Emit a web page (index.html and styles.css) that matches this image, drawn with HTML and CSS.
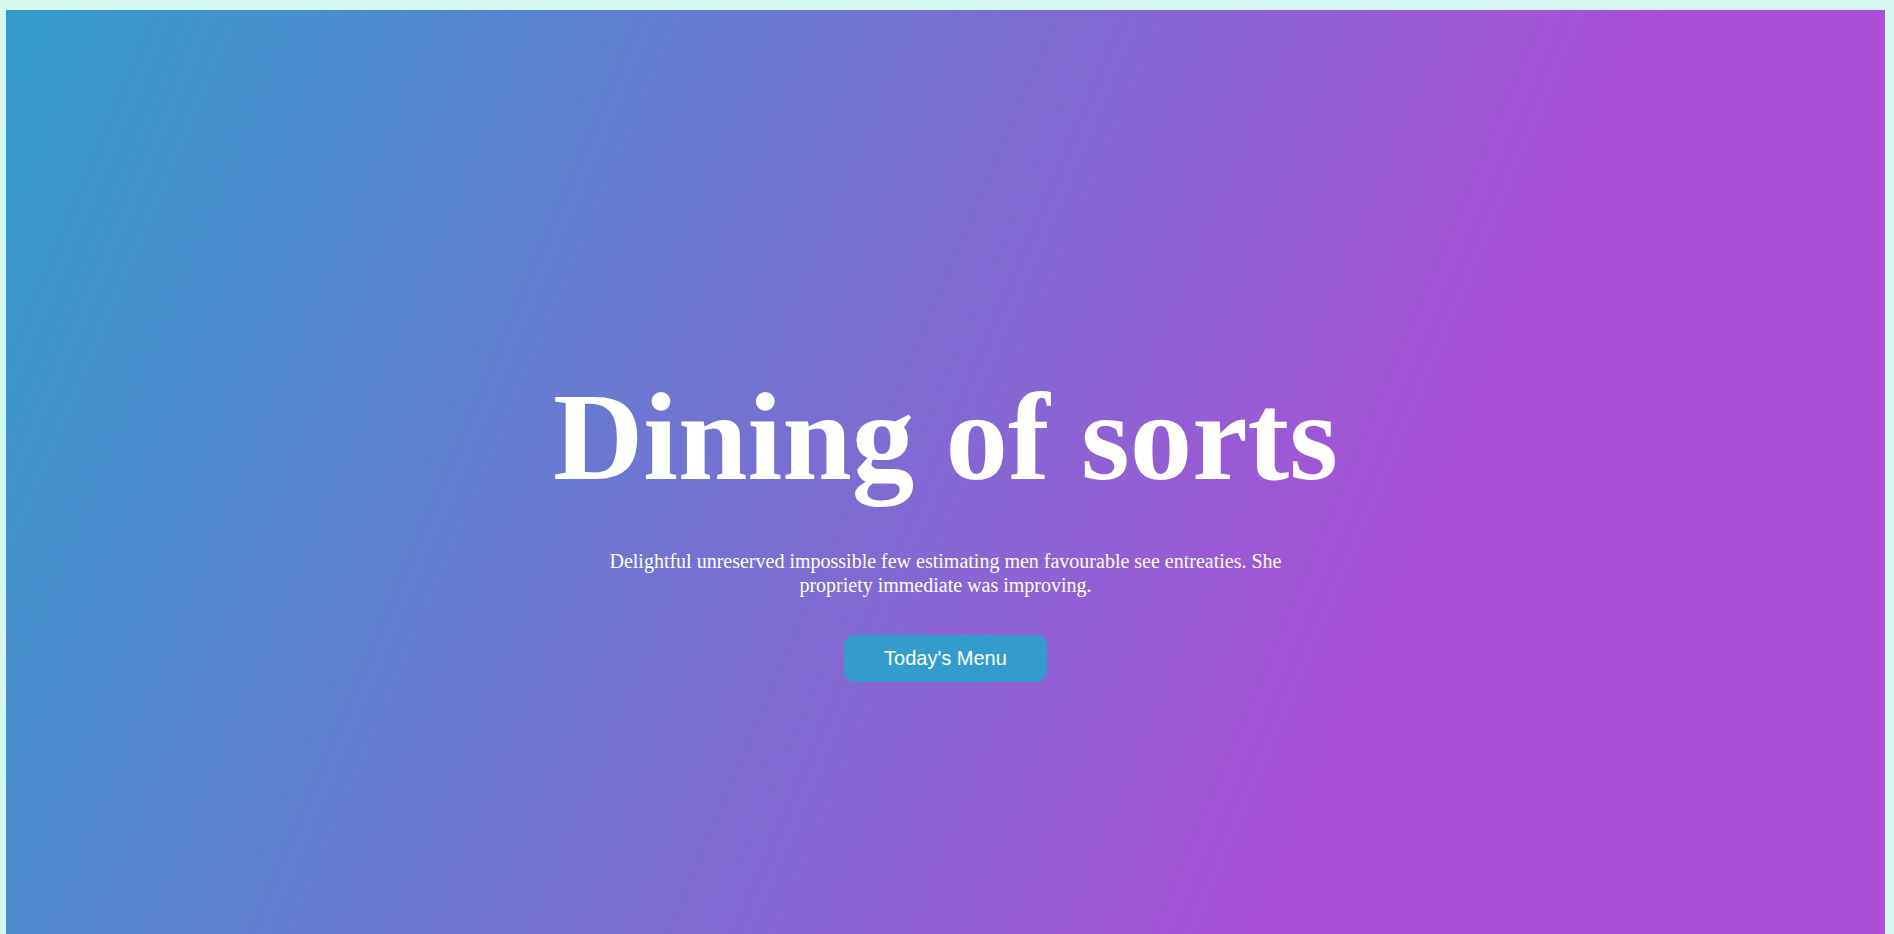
FILE: index.html
```html
<!DOCTYPE html>
<html lang="en">
<head>
<meta charset="utf-8">
<title>Dining of sorts</title>
<link rel="stylesheet" href="styles.css">
</head>
<body>
<section class="hero">
  <div class="hero-content">
    <h1 class="hero-title">Dining of sorts</h1>
    <p class="hero-text">Delightful unreserved impossible few estimating men favourable see entreaties. She propriety immediate was improving.</p>
    <a class="hero-button" href="#">Today's Menu</a>
  </div>
</section>
</body>
</html>
```
FILE: styles.css
```css
html, body {
  margin: 0;
  padding: 0;
}
body {
  background: #d4f8ef;
  padding: 10px 9px 0 6px;
  font-family: "Liberation Serif", "Times New Roman", serif;
  color: #fff;
}
.hero {
  height: 1028px;
  background: linear-gradient(113deg, #339ccc 0%, #aa4fd6 72%);
  display: flex;
  align-items: center;
  justify-content: center;
}
.hero-content {
  display: flex;
  flex-direction: column;
  align-items: center;
  text-align: center;
}
.hero-title {
  margin: 0;
  font-size: 125px;
  font-weight: bold;
  line-height: 1.15;
}
.hero-text {
  max-width: 700px;
  margin: 40px 0 38px;
  font-size: 20px;
  line-height: 24px;
}
.hero-button {
  display: inline-block;
  width: 203px;
  height: 47px;
  line-height: 47px;
  box-sizing: border-box;
  background: #339ccc;
  border-radius: 11px;
  color: #fff;
  text-decoration: none;
  font-family: "Liberation Sans", Arial, sans-serif;
  font-size: 20px;
}
```
